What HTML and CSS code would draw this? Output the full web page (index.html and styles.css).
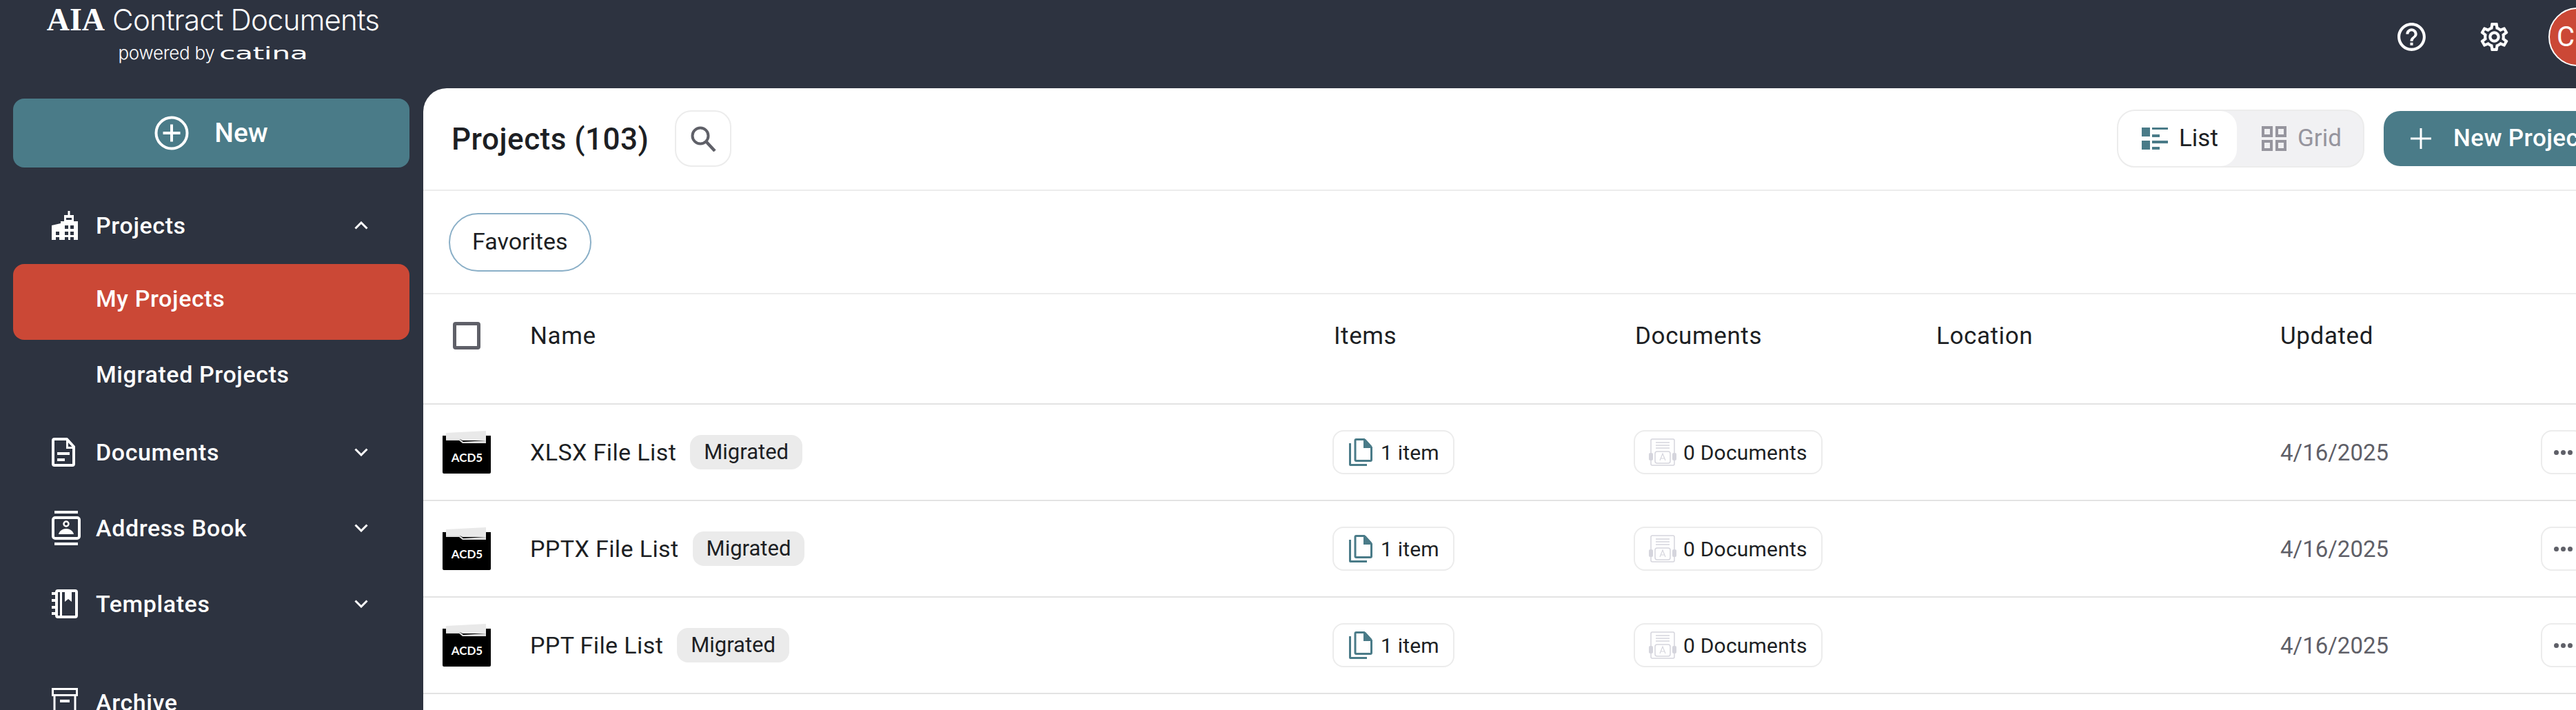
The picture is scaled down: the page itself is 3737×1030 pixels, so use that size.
FILE: index.html
```html
<!DOCTYPE html>
<html lang="en">
<head>
    <meta charset="UTF-8">
    <title>Projects - AIA Contract Documents</title>
    <link rel="stylesheet" href="styles.css">
</head>
<body>
<div class="page">
    <header class="topbar">
        <div class="logo">
            <div class="logo-main"><span class="logo-aia">AIA</span> Contract Documents</div>
            <div class="logo-sub">powered by <span class="logo-catina">catina</span></div>
        </div>
        <div class="top-actions">
            <svg class="top-icon" viewBox="0 0 24 24"><path fill="#fff" d="M11 18h2v-2h-2v2zm1-16C6.48 2 2 6.48 2 12s4.48 10 10 10 10-4.48 10-10S17.52 2 12 2zm0 18c-4.41 0-8-3.59-8-8s3.59-8 8-8 8 3.59 8 8-3.59 8-8 8zm0-14c-2.21 0-4 1.79-4 4h2c0-1.1.9-2 2-2s2 .9 2 2c0 2-3 1.75-3 5h2c0-2.25 3-2.5 3-5 0-2.21-1.79-4-4-4z"/></svg>
            <svg class="top-icon" viewBox="0 0 24 24"><path fill="#fff" d="M19.43 12.98c.04-.32.07-.64.07-.98 0-.34-.03-.66-.07-.98l2.11-1.65c.19-.15.24-.42.12-.64l-2-3.46c-.09-.16-.26-.25-.44-.25-.06 0-.12.01-.17.03l-2.49 1c-.52-.4-1.08-.73-1.69-.98l-.38-2.65C14.46 2.18 14.25 2 14 2h-4c-.25 0-.46.18-.49.42l-.38 2.65c-.61.25-1.17.59-1.69.98l-2.49-1c-.06-.02-.12-.03-.18-.03-.17 0-.34.09-.43.25l-2 3.46c-.13.22-.07.49.12.64l2.11 1.65c-.04.32-.07.65-.07.98 0 .33.03.66.07.98l-2.11 1.65c-.19.15-.24.42-.12.64l2 3.46c.09.16.26.25.44.25.06 0 .12-.01.17-.03l2.49-1c.52.4 1.08.73 1.69.98l.38 2.65c.03.24.24.42.49.42h4c.25 0 .46-.18.49-.42l.38-2.65c.61-.25 1.17-.59 1.69-.98l2.49 1c.06.02.12.03.18.03.17 0 .34-.09.43-.25l2-3.46c.12-.22.07-.49-.12-.64l-2.11-1.65zm-1.98-1.71c.04.31.05.52.05.73 0 .21-.02.43-.05.73l-.14 1.13.89.7 1.08.84-.7 1.21-1.27-.51-1.04-.42-.9.68c-.43.32-.84.56-1.25.73l-1.06.43-.16 1.13-.2 1.35h-1.4l-.19-1.35-.16-1.13-1.06-.43c-.43-.18-.83-.41-1.23-.71l-.91-.7-1.06.43-1.27.51-.7-1.21 1.08-.84.89-.7-.14-1.13c-.03-.31-.05-.54-.05-.74s.02-.43.05-.73l.14-1.13-.89-.7-1.08-.84.7-1.21 1.27.51 1.04.42.9-.68c.43-.32.84-.56 1.25-.73l1.06-.43.16-1.13.2-1.35h1.39l.19 1.35.16 1.13 1.06.43c.43.18.83.41 1.23.71l.91.7 1.06-.43 1.27-.51.7 1.21-1.07.85-.89.7.14 1.13zM12 8c-2.21 0-4 1.79-4 4s1.79 4 4 4 4-1.79 4-4-1.79-4-4-4zm0 6c-1.1 0-2-.9-2-2s.9-2 2-2 2 .9 2 2-.9 2-2 2z"/></svg>
            <div class="avatar">CM</div>
        </div>
    </header>

    <div class="layout">
        <aside class="sidebar">
            <button class="new-btn">
                <svg class="new-icon" viewBox="0 0 50 50"><circle cx="25" cy="25" r="22.5" fill="none" stroke="#fff" stroke-width="4"/><path d="M25 12.5v25M12.5 25h25" stroke="#fff" stroke-width="4"/></svg>
                New
            </button>

            <nav class="nav">
                <div class="nav-row nav-head">
                    <span class="nav-icon">
                        <svg width="38" height="42" viewBox="0 0 38 42"><path fill="#fff" fill-rule="evenodd" d="M23.500 0h3v6H32v9h6v27H0V21l13-3v-3h5V6h5.500zM21 10v3h8v-3zM19 21v5h5v-5zM27 21v5h5v-5zM19 30v5h5v-5zM27 30v5h5v-5zM6 30v5h5v-5zM6 38v4h5v-4zM19 38v4h5v-4zM27 38v4h5v-4z"/></svg>
                    </span>
                    Projects
                    <svg class="chevron" viewBox="0 0 20 12"><path d="M1.5 10.5 10 2l8.500 8.500" fill="none" stroke="#fff" stroke-width="3"/></svg>
                </div>
                <div class="nav-row nav-sub active">My Projects</div>
                <div class="nav-row nav-sub">Migrated Projects</div>

                <div class="nav-row nav-docs">
                    <span class="nav-icon">
                        <svg width="34" height="42" viewBox="0 0 34 42"><path fill="none" stroke="#fff" stroke-width="4" stroke-linejoin="round" d="M2 4a2 2 0 0 1 2-2h18l10 11v25a2 2 0 0 1-2 2H4a2 2 0 0 1-2-2z"/><path fill="#fff" d="M8 21h18v4H8zM8 30h11v4H8zM21 3h3v10h8v3H21z"/></svg>
                    </span>
                    Documents
                    <svg class="chevron" viewBox="0 0 20 12"><path d="M1.500 1.500 10 10l8.500-8.500" fill="none" stroke="#fff" stroke-width="3"/></svg>
                </div>
                <div class="nav-row">
                    <span class="nav-icon">
                        <svg width="42" height="50" viewBox="0 0 42 50"><path fill="#fff" d="M4 0h34v4H4zM4 46h34v4H4z"/><rect x="2" y="10" width="38" height="30" rx="3" fill="none" stroke="#fff" stroke-width="4"/><circle cx="21" cy="19" r="3.500" fill="none" stroke="#fff" stroke-width="2.500"/><path fill="#fff" d="M10 34c1-5 6-8 11-8s10 3 11 8z"/></svg>
                    </span>
                    Address Book
                    <svg class="chevron" viewBox="0 0 20 12"><path d="M1.500 1.500 10 10l8.500-8.500" fill="none" stroke="#fff" stroke-width="3"/></svg>
                </div>
                <div class="nav-row">
                    <span class="nav-icon">
                        <svg width="38" height="42" viewBox="0 0 38 42"><rect x="7" y="2" width="29" height="38" rx="2" fill="none" stroke="#fff" stroke-width="4"/><path fill="#fff" d="M0 4h5v4H0zM0 14h5v4H0zM0 24h5v4H0zM0 33h5v4H0zM19 2h10v16l-5-4-5 4zM12 2h3v38h-3z"/></svg>
                    </span>
                    Templates
                    <svg class="chevron" viewBox="0 0 20 12"><path d="M1.500 1.500 10 10l8.500-8.500" fill="none" stroke="#fff" stroke-width="3"/></svg>
                </div>
                <div class="nav-row nav-archive">
                    <span class="nav-icon">
                        <svg width="38" height="42" viewBox="0 0 38 42"><rect x="1.500" y="1.500" width="35" height="9" fill="none" stroke="#fff" stroke-width="3"/><path d="M4 10v30h30V10" fill="none" stroke="#fff" stroke-width="3"/><path fill="#fff" d="M12 17h14v4H12z"/></svg>
                    </span>
                    Archive
                </div>
            </nav>
        </aside>

        <main class="main">
            <div class="toolbar">
                <div class="toolbar-left">
                    <h1 class="title">Projects (103)</h1>
                    <button class="search-btn">
                        <svg width="38" height="38" viewBox="0 0 38 38"><circle cx="15" cy="15" r="11.500" fill="none" stroke="#5f6068" stroke-width="4"/><path d="m23 23 13 14" stroke="#5f6068" stroke-width="4.500"/></svg>
                    </button>
                </div>
                <div class="toolbar-right">
                    <div class="view-toggle">
                        <div class="view-opt view-on">
                            <svg width="38" height="32" viewBox="0 0 38 32"><path fill="#4a7b88" d="M0 0h12v13H0zM0 19h12v13H0zM15 0h23v3H15zM15 10h11v4H15zM15 19h23v4H15zM15 28h11v4H15z"/></svg>
                            List
                        </div>
                        <div class="view-opt">
                            <svg width="36" height="36" viewBox="0 0 36 36"><path fill="none" stroke="#96959e" stroke-width="4" d="M2 2h12v12H2zM22 2h12v12H22zM2 22h12v12H2zM22 22h12v12H22z"/></svg>
                            Grid
                        </div>
                    </div>
                    <button class="new-project">
                        <svg width="30" height="30" viewBox="0 0 30 30"><path d="M15 0v30M0 15h30" stroke="#fff" stroke-width="3"/></svg>
                        New Project
                    </button>
                </div>
            </div>

            <div class="filters">
                <span class="chip">Favorites</span>
            </div>

            <div class="grid grid-head">
                <div class="cell-check"><span class="checkbox"></span></div>
                <div>Name</div>
                <div class="head-pill">Items</div>
                <div class="head-pill">Documents</div>
                <div>Location</div>
                <div>Updated</div>
                <div></div>
            </div>

            <div class="grid grid-row">
                <div class="cell-thumb">
                    <svg class="folder" viewBox="0 0 70 62"><path fill="#000" d="M0 7h70v53a2 2 0 0 1-2 2H2a2 2 0 0 1-2-2z"/><path fill="#e9e9e9" d="M5 3 63 0v14H29l-4-2H5z"/><path fill="#dcdcdc" d="M5 12h20l5 4 33-2v4H29l-5-4H5z"/><text x="35.500" y="45" text-anchor="middle" class="folder-text">ACD5</text></svg>
                </div>
                <div class="cell-name">XLSX File List <span class="badge">Migrated</span></div>
                <div><span class="pill">
                    <svg class="pill-icon" width="34" height="40" viewBox="0 0 34 40"><path fill="none" stroke="#4a7b88" stroke-width="3" d="M9 3a1.500 1.500 0 0 1 1.500-1.500H22L32.500 13v18a1.500 1.500 0 0 1-1.500 1.500H10.500A1.500 1.500 0 0 1 9 31z"/><path fill="#4a7b88" d="M21 1h3l9 10v3H21zM0 7h3v30h23v3H2a2 2 0 0 1-2-2z"/></svg>
                    1 item</span></div>
                <div><span class="pill pill-docs">
                    <svg class="pill-icon" width="40" height="40" viewBox="0 0 40 40"><rect x="3" y="1" width="34" height="38" rx="2" fill="#fff" stroke="#d5d5dd" stroke-width="1.500"/><path d="M10 6h20M10 10h20M10 14h20" stroke="#d5d5dd" stroke-width="1.500"/><rect x="9" y="19" width="22" height="17" rx="3" fill="#fff" stroke="#d5d5dd" stroke-width="1.500"/><rect x="0" y="21" width="6" height="11" rx="2" fill="#d5d5dd"/><rect x="34" y="21" width="6" height="11" rx="2" fill="#d5d5dd"/><path d="m16 32 4-10 4 10M17.500 29h5" fill="none" stroke="#d5d5dd" stroke-width="1.200"/></svg>
                    0 Documents</span></div>
                <div></div>
                <div class="cell-date">4/16/2025</div>
                <div><span class="more"><i></i><i></i><i></i></span></div>
            </div>

            <div class="grid grid-row">
                <div class="cell-thumb">
                    <svg class="folder" viewBox="0 0 70 62"><path fill="#000" d="M0 7h70v53a2 2 0 0 1-2 2H2a2 2 0 0 1-2-2z"/><path fill="#e9e9e9" d="M5 3 63 0v14H29l-4-2H5z"/><path fill="#dcdcdc" d="M5 12h20l5 4 33-2v4H29l-5-4H5z"/><text x="35.500" y="45" text-anchor="middle" class="folder-text">ACD5</text></svg>
                </div>
                <div class="cell-name">PPTX File List <span class="badge">Migrated</span></div>
                <div><span class="pill">
                    <svg class="pill-icon" width="34" height="40" viewBox="0 0 34 40"><path fill="none" stroke="#4a7b88" stroke-width="3" d="M9 3a1.500 1.500 0 0 1 1.500-1.500H22L32.500 13v18a1.500 1.500 0 0 1-1.500 1.500H10.500A1.500 1.500 0 0 1 9 31z"/><path fill="#4a7b88" d="M21 1h3l9 10v3H21zM0 7h3v30h23v3H2a2 2 0 0 1-2-2z"/></svg>
                    1 item</span></div>
                <div><span class="pill pill-docs">
                    <svg class="pill-icon" width="40" height="40" viewBox="0 0 40 40"><rect x="3" y="1" width="34" height="38" rx="2" fill="#fff" stroke="#d5d5dd" stroke-width="1.500"/><path d="M10 6h20M10 10h20M10 14h20" stroke="#d5d5dd" stroke-width="1.500"/><rect x="9" y="19" width="22" height="17" rx="3" fill="#fff" stroke="#d5d5dd" stroke-width="1.500"/><rect x="0" y="21" width="6" height="11" rx="2" fill="#d5d5dd"/><rect x="34" y="21" width="6" height="11" rx="2" fill="#d5d5dd"/><path d="m16 32 4-10 4 10M17.500 29h5" fill="none" stroke="#d5d5dd" stroke-width="1.200"/></svg>
                    0 Documents</span></div>
                <div></div>
                <div class="cell-date">4/16/2025</div>
                <div><span class="more"><i></i><i></i><i></i></span></div>
            </div>

            <div class="grid grid-row">
                <div class="cell-thumb">
                    <svg class="folder" viewBox="0 0 70 62"><path fill="#000" d="M0 7h70v53a2 2 0 0 1-2 2H2a2 2 0 0 1-2-2z"/><path fill="#e9e9e9" d="M5 3 63 0v14H29l-4-2H5z"/><path fill="#dcdcdc" d="M5 12h20l5 4 33-2v4H29l-5-4H5z"/><text x="35.500" y="45" text-anchor="middle" class="folder-text">ACD5</text></svg>
                </div>
                <div class="cell-name">PPT File List <span class="badge">Migrated</span></div>
                <div><span class="pill">
                    <svg class="pill-icon" width="34" height="40" viewBox="0 0 34 40"><path fill="none" stroke="#4a7b88" stroke-width="3" d="M9 3a1.500 1.500 0 0 1 1.500-1.500H22L32.500 13v18a1.500 1.500 0 0 1-1.500 1.500H10.500A1.500 1.500 0 0 1 9 31z"/><path fill="#4a7b88" d="M21 1h3l9 10v3H21zM0 7h3v30h23v3H2a2 2 0 0 1-2-2z"/></svg>
                    1 item</span></div>
                <div><span class="pill pill-docs">
                    <svg class="pill-icon" width="40" height="40" viewBox="0 0 40 40"><rect x="3" y="1" width="34" height="38" rx="2" fill="#fff" stroke="#d5d5dd" stroke-width="1.500"/><path d="M10 6h20M10 10h20M10 14h20" stroke="#d5d5dd" stroke-width="1.500"/><rect x="9" y="19" width="22" height="17" rx="3" fill="#fff" stroke="#d5d5dd" stroke-width="1.500"/><rect x="0" y="21" width="6" height="11" rx="2" fill="#d5d5dd"/><rect x="34" y="21" width="6" height="11" rx="2" fill="#d5d5dd"/><path d="m16 32 4-10 4 10M17.500 29h5" fill="none" stroke="#d5d5dd" stroke-width="1.200"/></svg>
                    0 Documents</span></div>
                <div></div>
                <div class="cell-date">4/16/2025</div>
                <div><span class="more"><i></i><i></i><i></i></span></div>
            </div>
        </main>
    </div>
</div>
</body>
</html>
```

FILE: styles.css
```css
/* Page shell */
html, body {
    margin: 0;
    height: 100%;
    overflow: hidden;
    background-color: #2d3340;
}

body {
    font-family: Roboto, "Liberation Sans", sans-serif;
    color: #1d1f24;
}

button {
    font-family: inherit;
    cursor: pointer;
}

/* The app is wider than the window, its right edge gets cut off */
.page {
    width: 3800px;
    height: 1030px;
    display: flex;
    flex-direction: column;
}

/* Top bar */
.topbar {
    height: 128px;
    flex-shrink: 0;
    display: flex;
    justify-content: space-between;
    color: #fff;
}

.logo {
    width: 618px;
    padding-top: 2px;
    text-align: center;
    font-family: Inter, sans-serif;
    font-weight: 300;
}

.logo-main {
    font-size: 42px;
    line-height: 54px;
    letter-spacing: -0.8px;
}

.logo-aia {
    font-family: "Liberation Serif", serif;
    font-weight: 700;
    font-size: 46px;
    letter-spacing: 0;
}

.logo-sub {
    margin-top: 6px;
    font-size: 26px;
    line-height: 30px;
    letter-spacing: -0.3px;
}

.logo-catina {
    display: inline-block;
    width: 72px;
    margin-right: 56px;
    font-family: "DejaVu Sans", sans-serif;
    font-weight: 400;
    font-size: 24px;
    line-height: 24px;
    transform: scaleX(1.78);
    transform-origin: left center;
    text-align: left;
}

.top-actions {
    display: flex;
    align-items: flex-start;
    padding-right: 18px;
}

.top-icon {
    width: 49px;
    height: 49px;
    margin-top: 29px;
    margin-right: 71px;
}

.top-icon + .top-icon {
    margin-right: 54px;
}

.avatar {
    width: 85px;
    height: 85px;
    margin-top: 11px;
    box-sizing: border-box;
    border: 2px solid #fff;
    border-radius: 50%;
    background-color: #cb4836;
    font-size: 40px;
    line-height: 81px;
    text-align: center;
}

/* Sidebar + content */
.layout {
    flex: 1;
    display: flex;
    min-height: 0;
}

.sidebar {
    width: 614px;
    flex-shrink: 0;
    box-sizing: border-box;
    padding: 15px 20px 0 19px;
    color: #fff;
}

.new-btn {
    width: 100%;
    height: 100px;
    display: flex;
    align-items: center;
    justify-content: center;
    gap: 37px;
    padding-left: 6px;
    border: 0;
    border-radius: 16px;
    background-color: #4a7b88;
    color: #fff;
    font-size: 39px;
    font-weight: 500;
}

.new-icon {
    width: 50px;
    height: 50px;
}

.nav {
    margin-top: 34px;
}

.nav-row {
    height: 110px;
    box-sizing: border-box;
    padding: 0 60px 10px 56px;
    display: flex;
    align-items: center;
    font-size: 34px;
    font-weight: 500;
    letter-spacing: 0.6px;
}

.nav-head {
    height: 106px;
    padding-bottom: 6px;
}

.nav-docs {
    margin-top: 3px;
}

.nav-archive {
    margin-top: 33px;
}

.nav-sub {
    padding-left: 120px;
}

.active {
    background-color: #cb4836;
    border-radius: 16px;
}

.nav-icon {
    width: 64px;
    flex-shrink: 0;
    display: flex;
}

.chevron {
    width: 20px;
    height: 12px;
    margin-left: auto;
}

/* Content panel */
.main {
    flex: 1;
    background-color: #fff;
    border-top-left-radius: 34px;
}

.toolbar {
    height: 149px;
    box-sizing: border-box;
    border-bottom: 2px solid #ececec;
    display: flex;
    align-items: center;
    justify-content: space-between;
    padding-left: 41px;
    padding-bottom: 2px;
}

.toolbar-left,
.toolbar-right {
    display: flex;
    align-items: center;
}

.title {
    margin: 0;
    padding-top: 3px;
    font-size: 44px;
    font-weight: 500;
    line-height: 60px;
    letter-spacing: 0.5px;
}

.search-btn {
    width: 82px;
    height: 82px;
    margin-left: 37px;
    padding: 0;
    display: flex;
    align-items: center;
    justify-content: center;
    background: #fff;
    border: 2px solid #ececec;
    border-radius: 24px;
}

.view-toggle {
    width: 359px;
    height: 84px;
    box-sizing: border-box;
    display: flex;
    align-items: stretch;
    border: 2px solid #ececec;
    border-radius: 26px;
    background-color: #f1f1f3;
    color: #96959e;
    font-size: 35px;
    font-weight: 400;
}

.view-opt {
    flex: 1;
    display: flex;
    align-items: center;
    gap: 16px;
    padding-left: 36px;
}

.view-on {
    flex: 0 0 172px;
    box-sizing: border-box;
    padding-left: 34px;
    background-color: #fff;
    border-radius: 24px;
    color: #1d1f24;
}

.new-project {
    width: 342px;
    height: 80px;
    margin-left: 28px;
    padding: 0 0 0 39px;
    display: flex;
    align-items: center;
    gap: 32px;
    border: 0;
    border-radius: 24px;
    background-color: #4a7b88;
    color: #fff;
    font-size: 35px;
    font-weight: 500;
    letter-spacing: 0.4px;
    white-space: nowrap;
}

/* Filter chips */
.filters {
    height: 150px;
    box-sizing: border-box;
    border-bottom: 2px solid #ececec;
    padding: 32px 0 0 37px;
}

.chip {
    display: inline-block;
    height: 85px;
    box-sizing: border-box;
    padding: 0 32px;
    border: 2.500px solid #8aafc7;
    border-radius: 43px;
    font-size: 34px;
    line-height: 78px;
}

/* Project table */
.grid {
    display: grid;
    grid-template-columns: 155px 1164px 437px 439px 499px 378px 1fr;
    align-items: center;
    border-bottom: 2px solid #e3e3e3;
    box-sizing: border-box;
}

.grid-head {
    height: 160px;
    padding-bottom: 38px;
    font-size: 35px;
    letter-spacing: 0.6px;
}

.head-pill {
    padding-left: 2px;
}

.grid-row {
    height: 140px;
    font-size: 34px;
    letter-spacing: 0.4px;
}

.cell-check {
    padding-left: 43px;
    display: flex;
}

.checkbox {
    width: 40px;
    height: 40px;
    box-sizing: border-box;
    border: 5px solid #5f6068;
    border-radius: 4px;
}

.cell-thumb {
    padding-left: 28px;
    display: flex;
}

.folder {
    width: 70px;
    height: 62px;
}

.folder-text {
    font-family: Lato, sans-serif;
    font-size: 17px;
    font-weight: 700;
    letter-spacing: 0;
    fill: #fff;
}

.cell-name {
    display: flex;
    align-items: center;
    gap: 20px;
}

.badge {
    height: 50px;
    padding: 0 20px;
    border-radius: 16px;
    background-color: #ebebeb;
    font-size: 31px;
    line-height: 50px;
    letter-spacing: 0;
}

.pill {
    height: 64px;
    box-sizing: border-box;
    display: inline-flex;
    align-items: center;
    gap: 12px;
    padding: 0 20px 0 22px;
    border: 2px solid #ececec;
    border-radius: 16px;
    font-size: 30px;
    letter-spacing: 0.2px;
}

.pill-docs {
    gap: 10px;
    padding-left: 20px;
}

.pill-icon {
    flex-shrink: 0;
}

.cell-date {
    color: #5f6068;
    font-size: 33px;
    letter-spacing: 0;
}

.more {
    width: 64px;
    height: 64px;
    box-sizing: border-box;
    display: flex;
    align-items: center;
    justify-content: center;
    gap: 3px;
    border: 2px solid #ececec;
    border-radius: 16px;
}

.more i {
    width: 7px;
    height: 7px;
    border-radius: 50%;
    background-color: #5f6068;
}
```
